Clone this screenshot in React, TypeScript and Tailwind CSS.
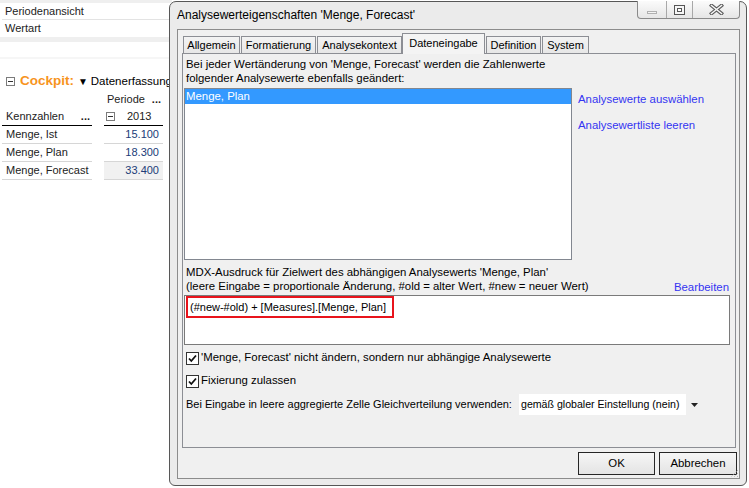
import React from "react";

// Hintergrund: Cockpit-Tabelle, darüber der Eigenschaften-Dialog
function Collapse() {
  return (
    <span className="inline-flex w-[9px] h-[9px] border border-[#7b7b7b] bg-white items-center justify-center">
      <span className="block w-[5px] h-px bg-[#333]" />
    </span>
  );
}

function Background() {
  return (
    <div className="w-[172px] text-[11px] text-[#222] whitespace-nowrap">
      <div className="h-[3px] bg-[#efefef]" />
      <div className="h-[17px] mx-[2px] pl-[3px] flex items-center border-b border-[#e3e3e3]">Periodenansicht</div>
      <div className="h-[17px] mx-[2px] pl-[3px] flex items-center">Wertart</div>
      <div className="h-[5px] bg-[#efefef]" />
      <div className="h-[15px]" />
      <div className="h-[2px] bg-[#f6f6f6]" />
      <div className="h-[14px]" />
      <div className="h-[17px] flex items-center pl-[6px]">
        <Collapse />
        <span className="ml-[5px] text-[13.5px] font-bold text-[#f7941d]">Cockpit:</span>
        <span className="ml-[4px] text-[10px] text-black">▼</span>
        <span className="ml-[3px] text-[11.5px] text-black">Datenerfassung</span>
      </div>
      <div className="flex">
        <div className="ml-[2px] w-[90px]">
          <div className="h-[18px]" />
          <div className="h-[18px] flex items-center justify-between pl-[4px] pr-[2px] border-b border-black">
            <span>Kennzahlen</span>
            <span className="font-bold leading-none">...</span>
          </div>
          <div className="h-[18px] flex items-center pl-[4px] border-b border-[#d6d6d6]">Menge, Ist</div>
          <div className="h-[18px] flex items-center pl-[4px] border-b border-[#d6d6d6]">Menge, Plan</div>
          <div className="h-[18px] flex items-center pl-[4px] border-b border-[#d6d6d6]">Menge, Forecast</div>
        </div>
        <div className="ml-[12px] w-[59px]">
          <div className="h-[18px] flex items-center justify-between pl-[3px] pr-[2px]">
            <span>Periode</span>
            <span className="font-bold leading-none">...</span>
          </div>
          <div className="h-[18px] flex items-center pl-[2px] border-b border-black">
            <Collapse />
            <span className="ml-[12px]">2013</span>
          </div>
          <div className="h-[18px] flex items-center justify-end pr-[4px] border-b border-[#d6d6d6] text-[#203c78]">15.100</div>
          <div className="h-[18px] flex items-center justify-end pr-[4px] border-b border-[#d6d6d6] text-[#203c78]">18.300</div>
          <div className="h-[18px] flex items-center justify-end pr-[4px] border-b border-[#d6d6d6] bg-[#f1f1f1] text-[#203c78]">33.400</div>
        </div>
      </div>
    </div>
  );
}

function WindowButtons() {
  return (
    <div className="-mt-px mr-[6px] flex h-[18px] border border-t-0 border-[#8a8a8a] rounded-b-[4px] overflow-hidden bg-gradient-to-b from-[#fbfbfb] to-[#e6e6e6]">
      <div className="w-[29px] flex items-center justify-center border-r border-[#a8a8a8]">
        <div className="mt-[6px] w-[10px] h-[3px] border border-[#b0b0b0] bg-[#f4f4f4]" />
      </div>
      <div className="w-[26px] flex items-center justify-center border-r border-[#a8a8a8]">
        <svg width="11" height="10" viewBox="0 0 11 10">
          <rect x="0.5" y="0.5" width="10" height="9" fill="#f6f6f6" stroke="#555" />
          <rect x="3.5" y="3.5" width="4" height="3" fill="#fff" stroke="#555" />
        </svg>
      </div>
      <div className="w-[46px] flex items-center justify-center">
        <svg width="15" height="11" viewBox="0 0 15 11">
          <path d="M2.5 1.5 L12.5 9.5 M12.5 1.5 L2.5 9.5" stroke="#5e5e5e" strokeWidth="3.6" strokeLinecap="square" />
          <path d="M2.5 1.5 L12.5 9.5 M12.5 1.5 L2.5 9.5" stroke="#f7f7f7" strokeWidth="1.5" strokeLinecap="square" />
        </svg>
      </div>
    </div>
  );
}

const tabs = [
  { label: "Allgemein", w: "w-[57px]" },
  { label: "Formatierung", w: "w-[75px]" },
  { label: "Analysekontext", w: "w-[85px]" },
  { label: "Dateneingabe", w: "w-[83px]", active: true },
  { label: "Definition", w: "w-[55px]" },
  { label: "System", w: "w-[47px]" },
];

function CheckBox() {
  return (
    <span className="inline-flex w-[13px] h-[13px] border border-[#333] bg-white items-center justify-center">
      <svg width="11" height="11" viewBox="0 0 11 11">
        <path d="M2 5.5 L4.3 8 L9 2.5" fill="none" stroke="#111" strokeWidth="1.8" />
      </svg>
    </span>
  );
}

function Dialog() {
  return (
    <div className="absolute left-[169px] top-[1px] w-[578px] h-[485px] rounded-t-[7px] rounded-b-[6px] border border-[#575757] bg-[#ebebeb] flex flex-col text-[11.4px] text-black">
      <div className="h-[27px] flex items-start justify-between">
        <div className="pl-[7px] pt-[6px] text-[12px] leading-[14px]">Analysewerteigenschaften 'Menge, Forecast'</div>
        <WindowButtons />
      </div>
      <div className="relative ml-[7px] w-[563px] h-[450px] border border-[#8c8c8c] bg-[#f0f0f0] flex flex-col">
        <div className="relative z-10 ml-[5px] mt-[3px] h-[20px] flex items-end text-[11px]">
          {tabs.map((t) =>
            t.active ? (
              <div key={t.label} className={`${t.w} h-[21px] -mb-px border border-b-0 border-[#8c8e94] bg-[#f4f4f4] flex items-start justify-center pt-[2px] leading-[14px]`}>
                {t.label}
              </div>
            ) : (
              <div key={t.label} className={`${t.w} h-[17px] border border-b-0 border-[#8c8e94] bg-gradient-to-b from-[#f3f3f3] to-[#e7e7e7] flex items-center justify-center leading-[14px] ml-px first:ml-0`}>
                {t.label}
              </div>
            )
          )}
        </div>
        <div className="ml-[4px] w-[554px] h-[395px] border border-[#8c8e94] bg-[#f0f0f0]">
          <div className="pl-[3px] pt-[3px] leading-[14px]">
            Bei jeder Wertänderung von 'Menge, Forecast' werden die Zahlenwerte
            <br />
            folgender Analysewerte ebenfalls geändert:
          </div>
          <div className="flex mt-[3px] ml-px">
            <div className="w-[388px] h-[172px] border border-[#828790] bg-white">
              <div className="h-[15px] bg-[#3399ff] text-white pl-px leading-[15px]">Menge, Plan</div>
            </div>
            <div className="ml-[6px] pt-[4px] leading-[14px] text-[#3434f2]">
              <div>Analysewerte auswählen</div>
              <div className="mt-[12px]">Analysewertliste leeren</div>
            </div>
          </div>
          <div className="mt-[5px] ml-px w-[546px] leading-[14px]">
            <div className="pl-[2px]">MDX-Ausdruck für Zielwert des abhängigen Analysewerts 'Menge, Plan'</div>
            <div className="flex justify-between pl-[2px] pr-px whitespace-nowrap">
              <span>(leere Eingabe = proportionale Änderung, #old = alter Wert, #new = neuer Wert)</span>
              <span className="text-[#3434f2] mt-px">Bearbeiten</span>
            </div>
          </div>
          <div className="mt-px ml-px w-[546px] h-[50px] border border-[#7a7a7a] bg-white">
            <div className="ml-px w-[208px] h-[22px] border-2 border-[#e8141c] flex items-center pl-[2px] text-[11px] whitespace-nowrap">
              (#new-#old) + [Measures].[Menge, Plan]
            </div>
          </div>
          <div className="mt-[6px] h-[14px] pl-[3px] flex items-center">
            <CheckBox />
            <span className="ml-[2px]">'Menge, Forecast' nicht ändern, sondern nur abhängige Analysewerte</span>
          </div>
          <div className="mt-[9px] h-[14px] pl-[3px] flex items-center">
            <CheckBox />
            <span className="ml-[2px]">Fixierung zulassen</span>
          </div>
          <div className="mt-[6px] h-[21px] pl-[3px] flex items-center">
            <span className="w-[333px] shrink-0 whitespace-nowrap text-[11px]">Bei Eingabe in leere aggregierte Zelle Gleichverteilung verwenden:</span>
            <div className="w-[184px] h-[21px] bg-white flex items-center">
              <span className="flex-1 pl-[2px] whitespace-nowrap text-[10.6px]">gemäß globaler Einstellung (nein)</span>
              <div className="w-[17px] h-[21px] bg-[#f0f0f0] flex items-center justify-center">
                <svg width="7" height="4" viewBox="0 0 7 4">
                  <path d="M0 0 L7 0 L3.5 4 Z" fill="#222" />
                </svg>
              </div>
            </div>
          </div>
        </div>
        <div className="mt-[4px] pr-[2px] flex justify-end gap-[4px]">
          <div className="w-[77px] h-[23px] border border-[#262626] bg-gradient-to-b from-[#f6f6f6] to-[#e4e4e4] flex items-center justify-center">OK</div>
          <div className="w-[78px] h-[23px] border border-[#262626] bg-gradient-to-b from-[#f6f6f6] to-[#e4e4e4] flex items-center justify-center">Abbrechen</div>
        </div>
        <svg className="absolute right-0 bottom-0" width="10" height="10" viewBox="0 0 10 10">
          <path d="M9 2 L2 9 M9 5 L5 9 M9 8 L8 9" stroke="#a0a0a0" strokeWidth="1" strokeDasharray="1 1" />
        </svg>
      </div>
    </div>
  );
}

export default function App() {
  return (
    <div className="relative w-[749px] h-[488px] overflow-hidden bg-white font-['Liberation_Sans',Arial,sans-serif]">
      <Background />
      <Dialog />
    </div>
  );
}
